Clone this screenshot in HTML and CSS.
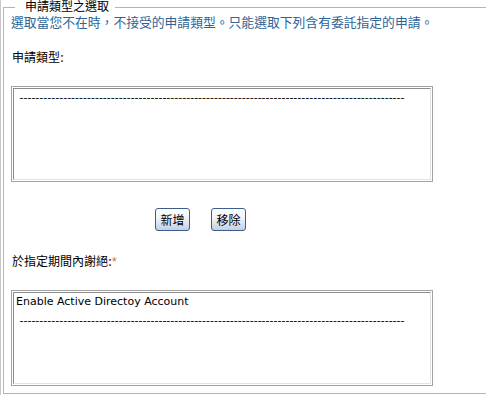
FILE: index.html
```html
<!DOCTYPE html>
<html lang="zh-Hant">
<head>
  <meta charset="UTF-8" />
  <title>申請類型之選取</title>
  <link rel="stylesheet" href="styles.css">
</head>
<body>
  <div class="page">
    <fieldset class="group">
      <legend>申請類型之選取</legend>
      <p class="hint">選取當您不在時，不接受的申請類型。只能選取下列含有委託指定的申請。</p>

      <div class="label">申請類型<b class="colon">:</b></div>
      <div class="listbox">
        <div class="listbox-inner">
          <div class="option">&nbsp;-------------------------------------------------------------------------------------------------</div>
        </div>
      </div>

      <div class="actions">
        <button class="btn">新增</button>
        <button class="btn">移除</button>
      </div>

      <div class="label">於指定期間內謝絕<b class="colon">:</b><span class="req">*</span></div>
      <div class="listbox">
        <div class="listbox-inner">
          <div class="option">Enable Active Directoy Account</div>
          <div class="option">&nbsp;-------------------------------------------------------------------------------------------------</div>
        </div>
      </div>
    </fieldset>
  </div>
</body>
</html>
```

FILE: styles.css
```css
html, body {
  margin: 0;
  background: #fff;
}
body {
  font-family: 'Liberation Sans', 'Noto Sans CJK TC', sans-serif;
  font-size: 12px;
  color: #000;
  overflow: hidden;
}
.page {
  border-left: 1px solid #c8c8c8;
  padding-left: 2px;
  height: 395px;
  box-sizing: border-box;
}
.group {
  margin: 0;
  border: 1px solid #b4b4b4;
  border-right: 0;
  padding: 1px 0 7px 7px;
  min-width: 0;
}
.group legend {
  margin-left: 4px;
  padding: 0 6px 0 10px;
  font-size: 12px;
  line-height: 14px;
}
.hint {
  margin: 0;
  font-size: 12.8px;
  line-height: 16px;
  color: #2e6496;
}
.label {
  line-height: 16px;
  margin-top: 19px;
  padding-left: 1px;
}
.colon {
  color: #6a3a10;
}
.req {
  color: #d2691e;
}
.listbox {
  margin-top: 20px;
  width: 422px;
  box-sizing: border-box;
  border: 1px solid #a3a3a3;
  padding: 1px;
  background: #fff;
}
.listbox-inner {
  height: 90px;
  border: 1px solid;
  border-color: #8c8c8c #e3e3e3 #e3e3e3 #8c8c8c;
  padding: 0 2px;
  overflow: hidden;
}
.option {
  font-family: 'DejaVu Sans', 'Noto Sans CJK TC', sans-serif;
  font-size: 11px;
  line-height: 18px;
  white-space: nowrap;
}
.option + .option {
  margin-top: 1px;
}
.actions {
  display: flex;
  gap: 21px;
  padding-left: 144px;
  margin-top: 26px;
  margin-bottom: 23px;
}
.actions + .label {
  margin-top: 0;
}
.btn {
  width: 35px;
  height: 23px;
  padding: 0;
  font-family: inherit;
  font-size: 12px;
  color: #000;
  border: 1px solid #3d5d8c;
  border-radius: 3px;
  background: linear-gradient(to bottom, #ffffff 0%, #eef2f8 45%, #c3d0e3 100%);
}
```
